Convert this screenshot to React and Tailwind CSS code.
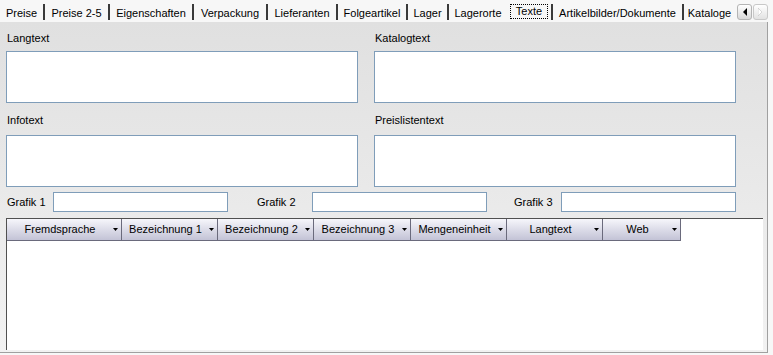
const tabs = [
  { t: 'Preise', w: 'w-[43px]', sep: true },
  { t: 'Preise 2-5', w: 'w-[63px]', sep: true },
  { t: 'Eigenschaften', w: 'w-[82px]', sep: true },
  { t: 'Verpackung', w: 'w-[72px]', sep: true },
  { t: 'Lieferanten', w: 'w-[68px]', sep: true },
  { t: 'Folgeartikel', w: 'w-[68px]', sep: true },
  { t: 'Lager', w: 'w-[39px]', sep: true },
  { t: 'Lagerorte', w: 'w-[58px]', sep: false },
  { t: 'Texte', w: 'w-[44px]', sep: true, sel: true },
  { t: 'Artikelbilder/Dokumente', w: 'w-[129px]', sep: true },
  { t: 'Kataloge', w: 'w-[51px]', sep: false },
];

const cols = [
  { t: 'Fremdsprache', w: 'w-[115px]' },
  { t: 'Bezeichnung 1', w: 'w-[96px]' },
  { t: 'Bezeichnung 2', w: 'w-[96px]' },
  { t: 'Bezeichnung 3', w: 'w-[97px]' },
  { t: 'Mengeneinheit', w: 'w-[96px]' },
  { t: 'Langtext', w: 'w-[96px]' },
  { t: 'Web', w: 'w-[78px]' },
];

function Box({ label, w, gap }) {
  return (
    <div className={w}>
      <div className="h-[13px] pl-[1px] whitespace-nowrap">{label}</div>
      <div className={`${gap} h-[52px] border border-[#7f9db9] bg-white`} />
    </div>
  );
}

export default function App() {
  return (
    <div className="w-[773px] h-[355px] overflow-hidden bg-[#f7f7f7] text-[11px] leading-[13px] text-black font-['Liberation_Sans',Arial,sans-serif]">
      {/* tab strip */}
      <div className="h-[22px] flex">
        {tabs.map((tab) => (
          <div key={tab.t} className="flex h-[22px]">
            {tab.sel ? (
              <div className={`${tab.w} h-[22px] flex justify-center pt-[4px]`}>
                <div className="h-[15px] w-[38px] border border-dotted border-black flex justify-center whitespace-nowrap">
                  {tab.t}
                </div>
              </div>
            ) : (
              <div className={`${tab.w} h-[22px] flex justify-center pt-[7px] whitespace-nowrap`}>{tab.t}</div>
            )}
            {tab.sep && <div className="w-[2px] h-[16px] mt-[4px] bg-[#3a3a3a]" />}
          </div>
        ))}
        <div className="flex gap-[1px] ml-[2px] mt-[4px]">
          <div className="w-[15px] h-[16px] rounded-[3px] border border-[#b4b4b4] bg-linear-to-b from-white to-[#d8d8d8] flex items-center justify-center">
            <svg width="5" height="8" viewBox="0 0 5 8"><path d="M5 0 L1 4 L5 8 Z" fill="#000" /></svg>
          </div>
          <div className="w-[15px] h-[16px] rounded-[3px] border border-[#c8c8c8] bg-linear-to-b from-white to-[#e2e2e2] flex items-center justify-center">
            <svg width="5" height="8" viewBox="0 0 5 8"><path d="M0 0 L4 4 L0 8 Z" fill="#ffffff" stroke="#c0c0c0" strokeWidth="0.6" /></svg>
          </div>
        </div>
      </div>

      {/* panel */}
      <div className="w-[768px] h-[331px] border-r border-b border-[#a0a0a0] bg-linear-to-b from-[#e0e0e0] to-[#f2f2f2] pl-[6px] pt-[10px]">
        <div className="flex gap-[16px]">
          <Box label="Langtext" w="w-[352px]" gap="mt-[6px]" />
          <Box label="Katalogtext" w="w-[362px]" gap="mt-[6px]" />
        </div>
        <div className="flex gap-[16px] mt-[11px]">
          <Box label="Infotext" w="w-[352px]" gap="mt-[8px]" />
          <Box label="Preislistentext" w="w-[362px]" gap="mt-[8px]" />
        </div>
        <div className="flex items-center h-[20px] mt-[5px]">
          <div className="w-[47px] pl-[1px] whitespace-nowrap">Grafik 1</div>
          <div className="w-[175px] h-[20px] border border-[#7f9db9] bg-white" />
          <div className="w-[84px] pl-[29px] whitespace-nowrap">Grafik 2</div>
          <div className="w-[175px] h-[20px] border border-[#7f9db9] bg-white" />
          <div className="w-[74px] pl-[27px] whitespace-nowrap">Grafik 3</div>
          <div className="w-[175px] h-[20px] border border-[#7f9db9] bg-white" />
        </div>
        <div className="mt-[6px] w-[757px] h-[132px] bg-white border-t border-l border-[#505050]">
          <div className="flex">
            {cols.map((c) => (
              <div
                key={c.t}
                className={`${c.w} h-[22px] flex items-center border-r border-b border-[#6a6a7c] bg-linear-to-b from-[#f6f6fb] to-[#c3c3d6]`}
              >
                <div className="flex-1 text-center whitespace-nowrap">{c.t}</div>
                <svg className="mr-[3px]" width="5" height="3" viewBox="0 0 5 3">
                  <path d="M0 0 H5 L2.5 3 Z" fill="#000" />
                </svg>
              </div>
            ))}
          </div>
        </div>
      </div>
    </div>
  );
}
